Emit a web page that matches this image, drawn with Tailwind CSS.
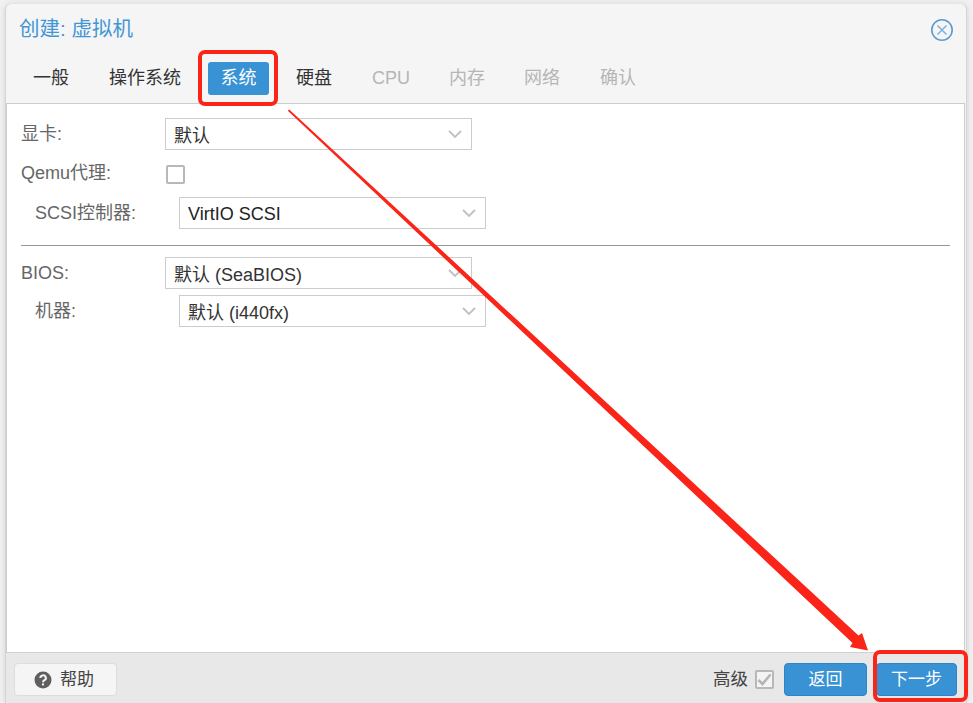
<!DOCTYPE html>
<html>
<head>
<meta charset="utf-8">
<script src="https://cdn.jsdelivr.net/npm/@tailwindcss/browser@4"></script>
</head>
<body class="m-0 bg-[#f0f0f0]">
<div class="relative w-[973px] h-[703px] overflow-hidden bg-[#f1f1f1] font-['Liberation_Sans','Noto_Sans_CJK_SC',sans-serif]">
  <div class="ml-[5px] mt-[4px] w-[962px] h-[699px] flex flex-col rounded-t-[6px] bg-[#f5f5f5] border-r border-l border-[#d4d4d4] shadow-[0_0_6px_rgba(0,0,0,0.12)]">
    <div class="h-[99px] shrink-0 flex flex-col">
      <div class="h-[48px] shrink-0 flex items-center justify-between pl-[13px] pr-[12px]">
        <span class="text-[20.5px] leading-[50px] text-[#4296d6] pt-[1px]">创建: 虚拟机</span>
        <svg width="24" height="24" viewBox="0 0 24 24" class="mt-[3px]" fill="none">
          <circle cx="12" cy="12" r="10.2" stroke="#5b9bd1" stroke-width="1.6"/>
          <path d="M7.500 7.500 16.500 16.500M16.500 7.500 7.500 16.500" stroke="#7fb3de" stroke-width="1.5"/>
        </svg>
      </div>
      <div class="flex items-start pl-[9px] text-[18px] leading-[33px] mt-[10px]">
        <span class="w-[72px] text-center text-[#333]">一般</span>
        <span class="ml-[16px] w-[84px] text-center text-[#333]">操作系统</span>
        <span class="ml-[21px] w-[61px] h-[33px] rounded-[3px] text-center bg-[#3892d4] text-white">系统</span>
        <span class="ml-[5px] w-[80px] text-center text-[#333]">硬盘</span>
        <span class="ml-[-3px] w-[80px] text-center text-[#b5b5b5]">CPU</span>
        <span class="ml-[-4px] w-[80px] text-center text-[#b5b5b5]">内存</span>
        <span class="ml-[-5px] w-[80px] text-center text-[#b5b5b5]">网络</span>
        <span class="ml-[-4px] w-[80px] text-center text-[#b5b5b5]">确认</span>
      </div>
    </div>
    <div class="h-[550px] shrink-0 mr-[1px] bg-white border border-[#cccccc] pl-[14px] pr-[15px] pt-[14px] text-[18px] text-[#666]">
      <div class="flex items-center h-[32px]">
        <span class="w-[144px] pt-[1px]">显卡:</span>
        <div class="w-[307px] h-[32px] border border-[#cccccc] flex items-center justify-between pl-[8px] pr-[9px] text-[#333]">
          <span class="pt-[5px]">默认</span>
          <svg width="14" height="8" viewBox="0 0 14 8" fill="none"><path d="M1 1 7 7 13 1" stroke="#c0c0c0" stroke-width="1.8"/></svg>
        </div>
      </div>
      <div class="flex items-center h-[20px] mt-[14px]">
        <span class="w-[145px] pb-[2px]">Qemu代理:</span>
        <span class="w-[19px] h-[19px] border-2 border-[#b8b8b8] rounded-[2px] bg-white"></span>
      </div>
      <div class="flex items-center h-[32px] mt-[13px] pl-[14px]">
        <span class="w-[144px] pt-[1px]">SCSI控制器:</span>
        <div class="w-[307px] h-[32px] border border-[#cccccc] flex items-center justify-between pl-[8px] pr-[9px] text-[#222]">
          <span class="pt-[3px]">VirtIO SCSI</span>
          <svg width="14" height="8" viewBox="0 0 14 8" fill="none"><path d="M1 1 7 7 13 1" stroke="#c0c0c0" stroke-width="1.8"/></svg>
        </div>
      </div>
      <div class="h-[1px] bg-[#999999] mt-[16px] -mr-[1px]"></div>
      <div class="flex items-center h-[32px] mt-[11px]">
        <span class="w-[144px]">BIOS:</span>
        <div class="w-[307px] h-[32px] border border-[#cccccc] flex items-center justify-between pl-[8px] pr-[9px] text-[#333]">
          <span class="pt-[5px]">默认 (SeaBIOS)</span>
          <svg width="14" height="8" viewBox="0 0 14 8" fill="none"><path d="M1 1 7 7 13 1" stroke="#c0c0c0" stroke-width="1.8"/></svg>
        </div>
      </div>
      <div class="flex items-center h-[32px] mt-[6px] pl-[14px]">
        <span class="w-[144px]">机器:</span>
        <div class="w-[307px] h-[32px] border border-[#cccccc] flex items-center justify-between pl-[8px] pr-[9px] text-[#333]">
          <span class="pt-[5px]">默认 (i440fx)</span>
          <svg width="14" height="8" viewBox="0 0 14 8" fill="none"><path d="M1 1 7 7 13 1" stroke="#c0c0c0" stroke-width="1.8"/></svg>
        </div>
      </div>
    </div>
    <div class="flex-1 bg-[#e8e8e8] flex items-center justify-between pl-[8px] pr-[9px] pt-[3px] text-[17px] -mt-[1px] border-t border-[#d0d0d0]">
      <div class="w-[103px] h-[33px] rounded-[4px] bg-[#f5f5f5] border border-[#dddddd] flex items-center justify-center gap-[8px] pr-[3px] text-[#444]">
        <svg width="18" height="18" viewBox="0 0 18 18">
          <circle cx="9" cy="9" r="8.500" fill="#5f5f5f"/>
          <path d="M6.300 7a2.800 2.600 0 1 1 4.200 2.200c-1 .6-1.500 1-1.500 2" fill="none" stroke="#f5f5f5" stroke-width="2"/>
          <rect x="8" y="12.400" width="2" height="2" fill="#f5f5f5"/>
        </svg>
        <span>帮助</span>
      </div>
      <div class="flex items-center">
        <span class="text-[#444] text-[17.5px]">高级</span>
        <span class="ml-[7px] w-[19px] h-[19px] border-2 border-[#b8b8b8] bg-[#f4f4f4] rounded-[2px] flex items-center justify-center">
          <svg width="15" height="13" viewBox="0 0 15 13" fill="none"><path d="M1.500 7 5.500 11 13.500 1.500" stroke="#b5b5b5" stroke-width="2.600"/></svg>
        </span>
        <span class="ml-[10px] w-[83px] h-[33px] rounded-[4px] bg-[#3892d4] border border-[#2f84c4] text-white flex items-center justify-center">返回</span>
        <span class="ml-[9px] w-[81px] h-[33px] rounded-[4px] bg-[#3892d4] border border-[#2f84c4] text-white flex items-center justify-center">下一步</span>
      </div>
    </div>
  </div>
  <svg class="absolute left-0 top-0 pointer-events-none" width="973" height="703" viewBox="0 0 973 703" fill="none">
    <rect x="200" y="52" width="76" height="52" rx="5" stroke="#fb2418" stroke-width="4"/>
    <rect x="875" y="652" width="91" height="48" rx="5" stroke="#fb2418" stroke-width="4"/>
    <polygon points="287.800,110.800 289.200,109.400 858.500,635.500 862,633 868,650.500 850,647 852.500,643" fill="#fb2418"/>
  </svg>
</div>
</body>
</html>
